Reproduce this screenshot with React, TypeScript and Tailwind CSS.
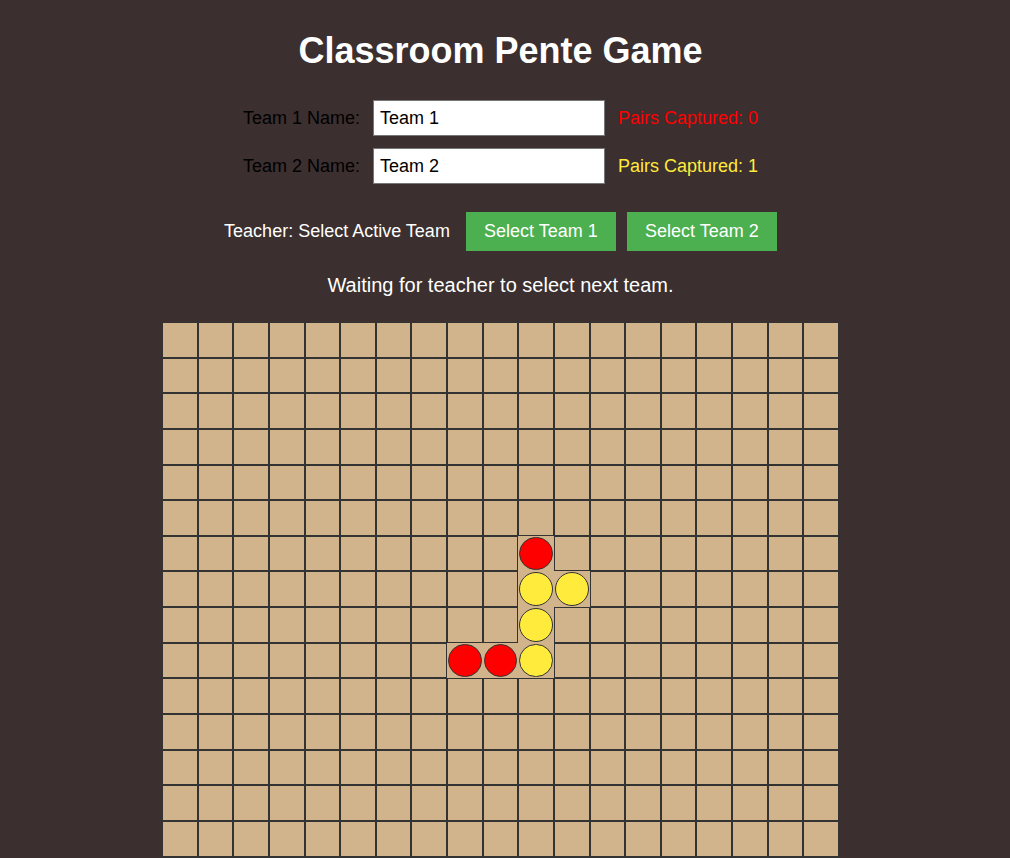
import { useState } from 'react';

const SIZE = 19;

// stones already placed: key = "row-col"
const initialStones: Record<string, 'red' | 'yellow'> = {
    '6-10': 'red',
    '7-10': 'yellow',
    '7-11': 'yellow',
    '8-10': 'yellow',
    '9-8': 'red',
    '9-9': 'red',
    '9-10': 'yellow',
};

export default function App() {
    const [team1, setTeam1] = useState('Team 1');
    const [team2, setTeam2] = useState('Team 2');
    const [stones] = useState(initialStones);

    return (
        <div className="min-h-screen bg-[#3b2f2f] font-['Liberation_Sans',Arial,sans-serif] text-[18px] pt-[30px] pb-10 pr-[9px]">
            <h1 className="text-center text-[36px] font-bold text-white leading-[41px] mb-[29px]">
                Classroom Pente Game
            </h1>

            {/* Team names */}
            <div className="flex flex-col items-center gap-3">
                <div className="flex items-center gap-[13px]">
                    <label className="text-black">Team 1 Name:</label>
                    <input
                        value={team1}
                        onChange={(e) => setTeam1(e.target.value)}
                        className="w-[232px] h-[36px] bg-white border border-[#767676] px-[6px] text-black outline-none"
                    />
                    <span className="text-[#ff0000] whitespace-nowrap">Pairs Captured: 0</span>
                </div>
                <div className="flex items-center gap-[13px]">
                    <label className="text-black">Team 2 Name:</label>
                    <input
                        value={team2}
                        onChange={(e) => setTeam2(e.target.value)}
                        className="w-[232px] h-[36px] bg-white border border-[#767676] px-[6px] text-black outline-none"
                    />
                    <span className="text-[#ffeb3b] whitespace-nowrap">Pairs Captured: 1</span>
                </div>
            </div>

            {/* Teacher controls */}
            <div className="flex items-center justify-center mt-[28px]">
                <span className="text-white mr-4">Teacher: Select Active Team</span>
                <button className="bg-[#4caf50] text-white w-[150px] h-[39px] mr-[11px]">Select Team 1</button>
                <button className="bg-[#4caf50] text-white w-[150px] h-[39px]">Select Team 2</button>
            </div>

            <p className="text-center text-white text-[20px] leading-[23px] mt-[23px] mb-[25px]">
                Waiting for teacher to select next team.
            </p>

            {/* Board */}
            <div className="mx-auto w-[677px] grid grid-cols-19">
                {Array.from({ length: SIZE * SIZE }).map((_, i) => {
                    const r = Math.floor(i / SIZE);
                    const c = i % SIZE;
                    const stone = stones[`${r}-${c}`];
                    return (
                        <div
                            key={i}
                            className={`aspect-square bg-[#d2b48c] border ${stone ? 'border-transparent' : 'border-[#333]'}`}
                        >
                            {stone && (
                                <div
                                    className={`w-full h-full rounded-full border border-[#333] ${stone === 'red' ? 'bg-[#ff0000]' : 'bg-[#ffeb3b]'}`}
                                />
                            )}
                        </div>
                    );
                })}
            </div>
        </div>
    );
}
